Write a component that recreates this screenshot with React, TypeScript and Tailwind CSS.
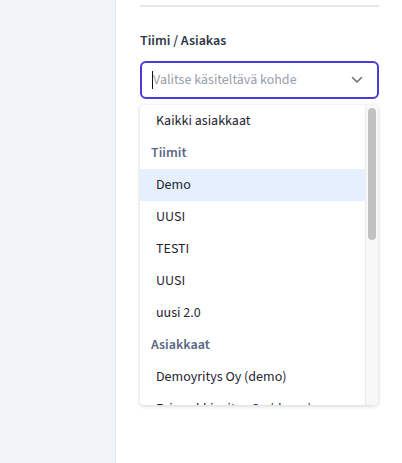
import React from "react";

const items: { label: string; type: "item" | "header"; active?: boolean }[] = [
  { label: "Kaikki asiakkaat", type: "item" },
  { label: "Tiimit", type: "header" },
  { label: "Demo", type: "item", active: true },
  { label: "UUSI", type: "item" },
  { label: "TESTI", type: "item" },
  { label: "UUSI", type: "item" },
  { label: "uusi 2.0", type: "item" },
  { label: "Asiakkaat", type: "header" },
  { label: "Demoyritys Oy (demo)", type: "item" },
  { label: "Esimerkki yritys Oy (demo)", type: "item" },
];

export default function App() {
  return (
    <div className="flex h-[463px] w-[402px] overflow-hidden bg-white font-['Source_Sans_3',Lato,sans-serif]">
      <div className="w-[116px] shrink-0 border-r border-[#e3e7ee] bg-[#f0f3f8]" />
      <div className="flex flex-1 flex-col pl-[24px] pr-[23px]">
        <div className="mt-[5px] h-[2px] w-full bg-[#e5e7eb]" />
        <div className="mt-[25px] text-[14px] font-semibold leading-[18px] text-[#2d3748]">
          Tiimi / Asiakas
        </div>
        <div className="mt-[11px] flex h-[38px] items-center rounded-[6px] border-2 border-[#4b3ad8] pl-[10px] pr-[14px]">
          <span className="h-[18px] w-px bg-[#111]" />
          <span className="flex-1 text-[14px] text-[#9aa0ac]">Valitse käsiteltävä kohde</span>
          <svg width="12" height="8" viewBox="0 0 12 8" fill="none">
            <path d="M1.5 1.5 6 6l4.5-4.5" stroke="#6b7280" strokeWidth="1.6" strokeLinecap="round" strokeLinejoin="round" />
          </svg>
        </div>
        <div className="mt-[6px] mr-px flex h-[300px] overflow-hidden rounded-[4px] bg-white shadow-[0_1px_4px_rgba(0,0,0,0.18)]">
          <div className="flex-1 overflow-hidden">
            {items.map((it, i) =>
              it.type === "header" ? (
                <div
                  key={i}
                  className="flex h-[32px] items-center pl-[11px] text-[14px] font-semibold text-[#5b6784]"
                >
                  {it.label}
                </div>
              ) : (
                <div
                  key={i}
                  className={`flex h-[32px] items-center pl-[16px] text-[14px] text-[#1f2430] ${
                    it.active ? "bg-[#e6effd]" : ""
                  }`}
                >
                  {it.label}
                </div>
              )
            )}
          </div>
          <div className="w-[13px] shrink-0 border-l border-[#ececec] bg-[#f8f8f8] pl-[2px] pt-[3px]">
            <div className="h-[132px] w-[8px] rounded-full bg-[#c1c1c1]" />
          </div>
        </div>
      </div>
    </div>
  );
}
